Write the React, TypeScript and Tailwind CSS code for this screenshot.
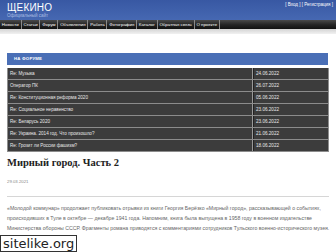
import React from 'react';

const navItems = [
  'Новости',
  'Статьи',
  'Форум',
  'Объявления',
  'Работа',
  'Фотография',
  'Каталог',
  'Обратная связь',
  'О проекте',
];

const topics = [
  { title: 'Re: Музыка', date: '24.06.2022' },
  { title: 'Оператор ПК', date: '26.07.2022' },
  { title: 'Re: Конституционная реформа 2020', date: '05.06.2022' },
  { title: 'Re: Социальное неравенство', date: '23.06.2022' },
  { title: 'Re: Беларусь 2020', date: '23.06.2022' },
  { title: 'Re: Украина. 2014 год. Что произошло?', date: '21.06.2022' },
  { title: 'Re: Грозит ли России фашизм?', date: '18.06.2022' },
];

export default function App() {
  return (
    <div className="relative w-[336px] h-[252px] overflow-hidden bg-white font-['Liberation_Sans',Arial,sans-serif]">
      {/* header */}
      <div className="h-[20px] flex justify-between px-[7px] bg-gradient-to-b from-[#3858a3] to-[#4668b2]">
        <div className="pt-[3px]">
          <div className="text-[10px] leading-[9px] text-white tracking-[0.2px]">ЩЕКИНО</div>
          <div className="text-[4.5px] leading-[5px] mt-[1px] text-[#a9bde3]">Официальный сайт</div>
        </div>
        <div className="pt-[2px] text-[4.5px] leading-[5px] text-white -mr-[4px]">[ Вход ] [ Регистрация ]</div>
      </div>

      {/* navigation */}
      <div className="h-[9px] flex bg-gradient-to-b from-[#4a4a4a] via-[#262626] to-[#111]">
        {navItems.map((item) => (
          <div
            key={item}
            className="px-[1.8px] text-[4.4px] leading-[9px] text-white border-r border-[#8a8a8a] whitespace-nowrap"
          >
            {item}
          </div>
        ))}
      </div>
      <div className="h-[5px] bg-gradient-to-b from-[#d4d4d4] to-[#f1f1f1]" />

      <div className="px-[7px]">
        {/* forum block */}
        <div className="mt-[19px] w-[321px]">
          <div className="h-[12px] bg-[#4a6fb6] text-white text-[4.3px] leading-[12px] font-bold pl-[7px] tracking-[0.2px]">
            НА ФОРУМЕ
          </div>
          <div className="mt-[3px] w-[322px] bg-[#3c3c3c] border-x border-[#8f8f8f]">
            {topics.map((t) => (
              <div key={t.date + t.title} className="h-[12px] flex border-b border-[#8c8c8c]">
                <div className="w-[245px] pl-[2px] text-[4.6px] leading-[11px] text-[#e8e8e8] border-r border-[#999]">
                  {t.title}
                </div>
                <div className="pl-[2px] text-[4.6px] leading-[11px] text-[#e8e8e8] border-l border-[#222]">{t.date}</div>
              </div>
            ))}
          </div>
        </div>

        {/* article */}
        <h1 className="mt-[5px] text-[10.5px] leading-[12px] font-bold text-[#222] font-['Liberation_Serif','Times_New_Roman',serif]">
          Мирный город. Часть 2
        </h1>
        <div className="mt-[10px] text-[4.3px] leading-[6px] text-[#888]">29.03.2021</div>
        <div className="mt-[11px] h-[1px] w-[322px] bg-[#d6d6d6]" />
        <p className="mt-[6px] w-[324px] text-[5.2px] leading-[10px] text-[#666]">
          «Молодой коммунар» продолжает публиковать отрывки из книги Георгия Берёзко «Мирный город», рассказывающей о событиях,
          происходивших в Туле в октябре — декабре 1941 года. Напомним, книга была выпущена в 1958 году в военном издательстве
          Министерства обороны СССР. Фрагменты романа приводятся с комментариями сотрудников Тульского военно-исторического
          музея. Отстоять город.»
        </p>
      </div>

      {/* watermark */}
      <div className="absolute left-0 bottom-0 w-[77px] h-[17px] bg-white border border-[#333] text-[13px] leading-[15px] text-[#222] pl-[2px] font-['DejaVu_Sans',sans-serif]">
        sitelike.org
      </div>
    </div>
  );
}
